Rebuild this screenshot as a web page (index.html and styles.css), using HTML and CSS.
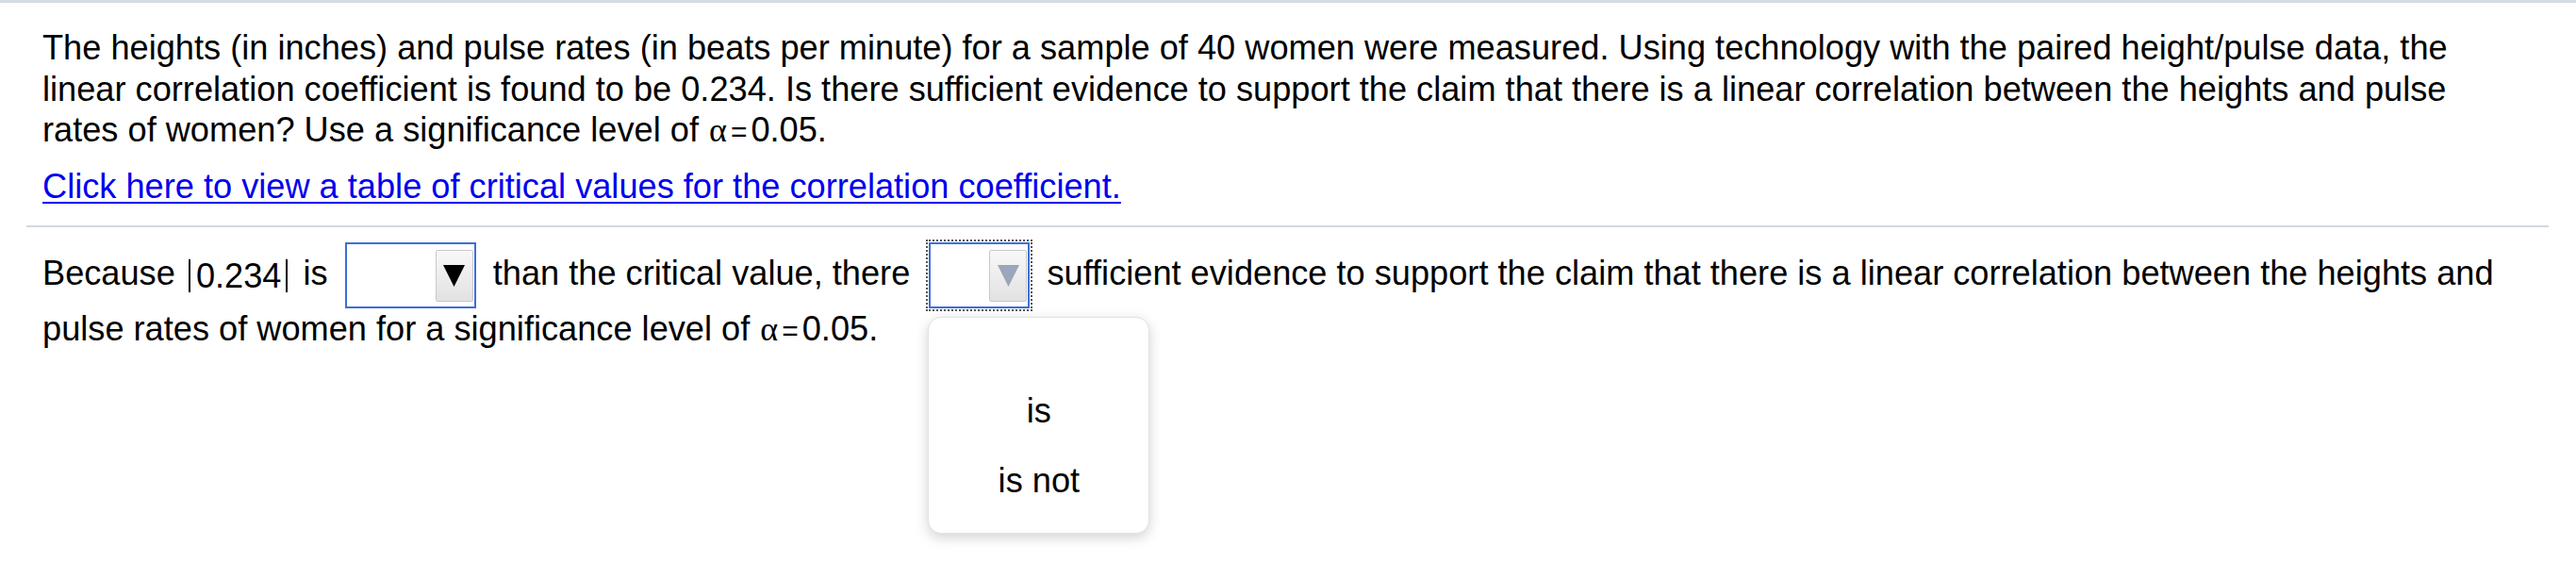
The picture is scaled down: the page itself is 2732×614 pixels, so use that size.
FILE: index.html
```html
<!DOCTYPE html>
<html>
<head>
<meta charset="utf-8">
<link rel="stylesheet" href="styles.css">
</head>
<body>
<div class="topbar"></div>
<div class="question">
  <p class="stem">The heights (in inches) and pulse rates (in beats per minute) for a sample of 40 women were measured. Using technology with the paired height/pulse data, the linear correlation coefficient is found to be 0.234. Is there sufficient evidence to support the claim that there is a linear correlation between the heights and pulse rates of women? Use a significance level of <span class="alpha">α</span><span class="eq">=</span>0.05.</p>
  <a class="link" href="#">Click here to view a table of critical values for the correlation coefficient.</a>
</div>
<div class="sep"></div>
<div class="answer">
  <p class="sentence">Because <span class="abs">0.234</span> is <span class="select wide"><span class="btn"><svg class="tri" viewBox="0 0 24 24" width="23" height="23"><polygon points="0,0 24,0 12,24" fill="#000"/></svg></span></span> than the critical value, there <span class="select narrow focused"><span class="btn"><svg class="tri" viewBox="0 0 24 24" width="23" height="23"><polygon points="0,0 24,0 12,24" fill="#9aa6ba"/></svg></span><span class="menu"><span class="opt">is</span><span class="opt">is not</span></span></span> sufficient evidence to support the claim that there is a linear correlation between the heights and pulse rates of women for a significance level of <span class="alpha">α</span><span class="eq">=</span>0.05.</p>
</div>
</body>
</html>
```

FILE: styles.css
```css
html, body {
  margin: 0;
  padding: 0;
  background: #fff;
}
body {
  min-height: 614px;
  font-family: "Liberation Sans", Arial, sans-serif;
  font-size: 36.2px;
  color: #000;
}
.topbar {
  height: 3px;
  background: #d5dbe3;
}
.question {
  padding: 26px 70px 0 45px;
}
.stem {
  margin: 0;
  line-height: 43.5px;
}
.link {
  display: inline-block;
  margin-top: 14px;
  line-height: 43.5px;
  color: #0000ee;
  text-decoration: underline;
  text-decoration-thickness: 2px;
  text-underline-offset: 4px;
}
.alpha {
  font-family: "Liberation Serif", serif;
  font-size: 36px;
  margin: 0 4px 0 1px;
}
.eq {
  font-size: 30px;
  margin-right: 4px;
}
.sep {
  margin: 20px 29px 0 28px;
  height: 2px;
  background: #d3d9e1;
}
.answer {
  padding: 16px 70px 0 45px;
}
.sentence {
  margin: 0;
  line-height: 43.5px;
}
.abs {
  display: inline-block;
  line-height: 35px;
  border-left: 2px solid #000;
  border-right: 2px solid #000;
  padding: 0 5px 0 6px;
  margin: 0 6px 0 4px;
  vertical-align: -3px;
}
.select {
  position: relative;
  display: inline-flex;
  justify-content: flex-end;
  align-items: center;
  box-sizing: border-box;
  height: 70px;
  border: 2px solid #3d6fd6;
  background: #fff;
  vertical-align: middle;
  padding-right: 1px;
  margin: 0 8px;
}
.select.wide {
  width: 139px;
}
.select.narrow {
  width: 107px;
  margin: 0 8px 0 10px;
}
.select.focused {
  outline: 2px dotted #555;
  outline-offset: 1px;
}
.btn {
  display: flex;
  align-items: center;
  justify-content: center;
  box-sizing: border-box;
  width: 40px;
  height: 55px;
  border: 1px solid #c9c9c9;
  border-radius: 2px;
  background: linear-gradient(#f8f8f8, #e2e2e2);
}
.menu {
  position: absolute;
  left: -3px;
  top: 77px;
  width: 235px;
  height: 230px;
  box-sizing: border-box;
  background: #fff;
  border: 1px solid #e2e2e2;
  border-radius: 14px;
  box-shadow: 0 4px 14px rgba(0, 0, 0, 0.18);
  display: flex;
  flex-direction: column;
  align-items: center;
  padding-top: 77px;
  gap: 31px;
  line-height: 43px;
}
.opt {
  display: block;
}
```
